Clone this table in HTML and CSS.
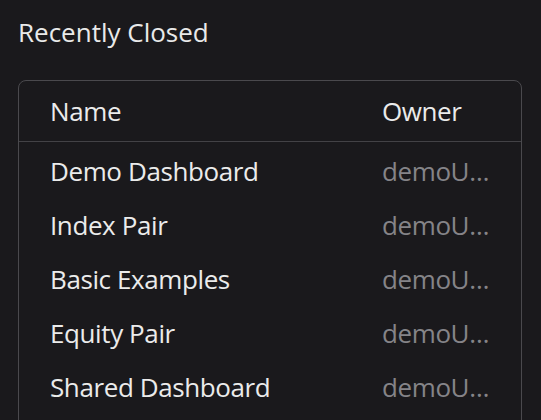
FILE: index.html
```html
<!DOCTYPE html>
<html lang="en">
<head>
  <meta charset="UTF-8">
  <meta name="viewport" content="width=device-width, initial-scale=1.0">
  <title>Recently Closed</title>
  <link rel="stylesheet" href="styles.css">
</head>
<body>
  <div class="panel">
    <h2 class="panel-title">Recently Closed</h2>

    <div class="recent-table">
      <div class="recent-row recent-head">
        <div class="cell">Name</div>
        <div class="cell">Owner</div>
      </div>

      <div class="recent-body">
        <div class="recent-row">
          <div class="cell">Demo Dashboard</div>
          <div class="cell owner">demoU…</div>
        </div>
        <div class="recent-row">
          <div class="cell">Index Pair</div>
          <div class="cell owner">demoU…</div>
        </div>
        <div class="recent-row">
          <div class="cell">Basic Examples</div>
          <div class="cell owner">demoU…</div>
        </div>
        <div class="recent-row">
          <div class="cell">Equity Pair</div>
          <div class="cell owner">demoU…</div>
        </div>
        <div class="recent-row">
          <div class="cell">Shared Dashboard</div>
          <div class="cell owner">demoU…</div>
        </div>
      </div>
    </div>
  </div>
</body>
</html>
```
FILE: styles.css
```css
html,
body {
  height: 100%;
  overflow: hidden;
}

body {
  font-family: "Open Sans", "Noto Sans", sans-serif;
  margin: 0;
  padding: 16px 19px 0 18px;
  background-color: #1a191c;
  color: #ebebeb;
  box-sizing: border-box;
}

.panel-title {
  margin: 0 0 32px;
  font-size: 26px;
  line-height: 32px;
  font-weight: 500;
  color: #e9e9e9;
}

.recent-table {
  border: 1px solid #4a494d;
  border-radius: 8px;
}

.recent-row {
  display: grid;
  grid-template-columns: 1fr 108px;
  padding: 11px 31px;
  font-size: 26px;
  line-height: 32px;
  font-weight: 500;
  letter-spacing: -0.4px;
}

.recent-head {
  padding-top: 14px;
  padding-bottom: 14px;
  border-bottom: 1px solid #434246;
}

.recent-body {
  padding: 2px 0 24px;
}

.cell {
  white-space: nowrap;
}

.owner {
  color: #858488;
}
```
